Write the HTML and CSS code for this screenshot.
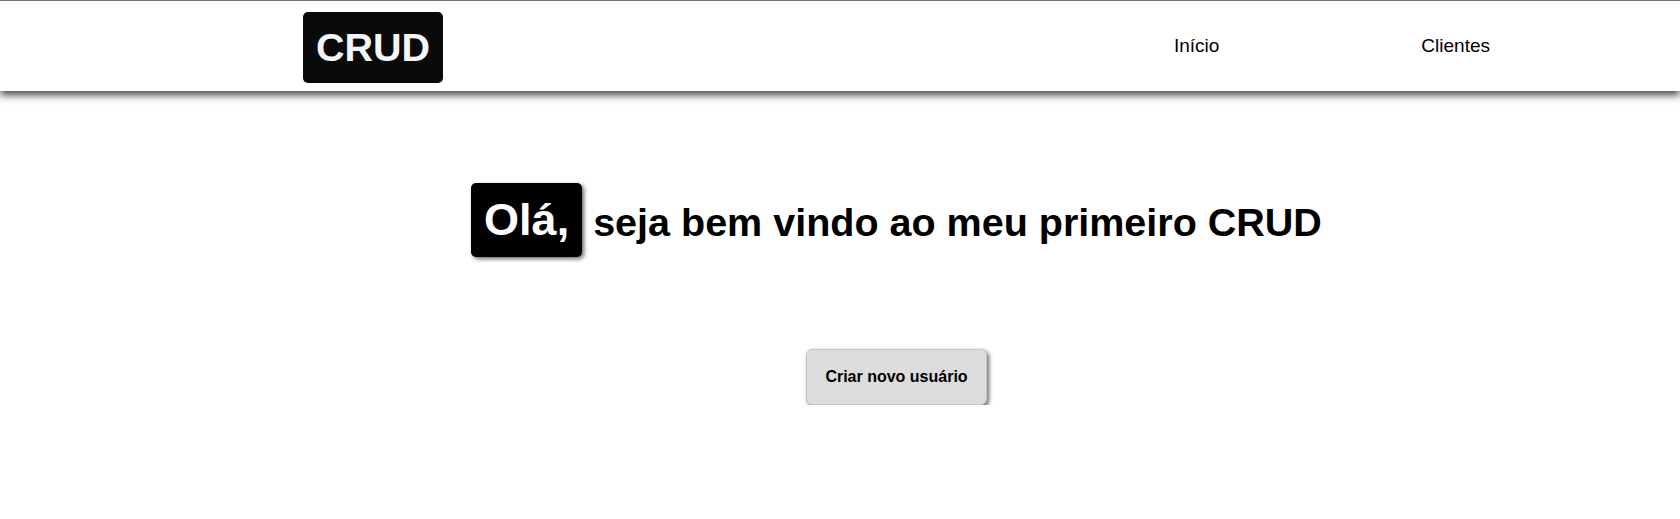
FILE: index.html
```html
<!DOCTYPE html>
<html lang="pt-BR">
<head>
<meta charset="utf-8">
<title>CRUD</title>
<link rel="stylesheet" href="styles.css">
</head>
<body>
<header class="topbar">
  <div class="wrap topbar-inner">
    <div class="logo">CRUD</div>
    <nav class="nav">
      <a class="nav-link" href="#">Início</a>
      <a class="nav-link" href="#">Clientes</a>
    </nav>
  </div>
</header>
<main class="wrap main">
  <h1 class="title"><span class="hello">Olá,</span><span class="rest">seja bem vindo ao meu primeiro CRUD</span></h1>
  <button class="btn" type="button">Criar novo usuário</button>
</main>
</body>
</html>
```
FILE: styles.css
```css
* { box-sizing: border-box; }
html, body { margin: 0; padding: 0; background: #fff; }
body { font-family: "Liberation Sans", Arial, sans-serif; color: #000; }

.wrap { width: 1187px; margin-left: 303px; }

.topbar {
  border-top: 1px solid #6c7a80;
  height: 91px;
  background: #fff;
  box-shadow: 0 4px 8px rgba(0, 0, 0, 0.75);
  position: relative;
}
.topbar-inner {
  height: 90px;
  display: flex;
  align-items: center;
  justify-content: space-between;
}
.logo {
  background: #0a0a0a;
  color: #f5f5f5;
  font-weight: bold;
  font-size: 39.5px;
  line-height: 71px;
  height: 71px;
  width: 140px;
  text-align: center;
  border-radius: 5px;
  margin-top: 2px;
}
.nav { display: flex; gap: 202px; }
.nav-link {
  color: #000;
  text-decoration: none;
  font-size: 19px;
}

.main {
  display: flex;
  flex-direction: column;
  align-items: center;
  padding-top: 92px;
}
.title {
  margin: 0;
  display: flex;
  align-items: center;
  gap: 11px;
  font-weight: bold;
}
.hello {
  background: #000;
  color: #fff;
  font-size: 45px;
  line-height: 52px;
  padding: 11px 13px;
  border-radius: 5px;
  box-shadow: 2px 2px 4px rgba(0, 0, 0, 0.6);
}
.rest { font-size: 39.5px; margin-top: 4px; }

.btn {
  margin-top: 92px;
  width: 181px;
  height: 56px;
  background: #dcdcdc;
  border: 1px solid #c8c8c8;
  border-radius: 6px;
  box-shadow: 2px 2px 4px rgba(0, 0, 0, 0.6);
  font-family: "Liberation Sans", Arial, sans-serif;
  font-weight: bold;
  font-size: 16px;
  color: #000;
  cursor: pointer;
}
```
